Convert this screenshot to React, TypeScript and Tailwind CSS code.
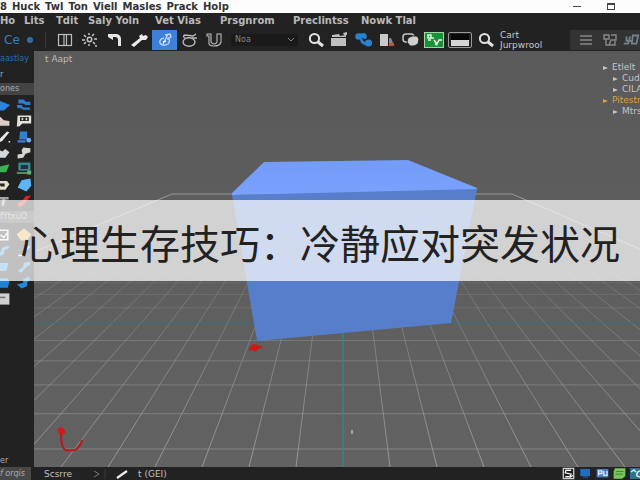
import type { ReactNode } from "react";

const titleWords = ["8", "Huck", "Twl", "Ton", "Viell", "Masles", "Prack", "Holp"];
const menus = ["Ho", "Lits", "Tdit", "Saly Yoln", "Vet Vias", "Prsgnrom", "Preclintss", "Nowk Tlal"];

const tree = [
  { label: "Etlelt", nested: false, active: false },
  { label: "Cuds", nested: true, active: false },
  { label: "CILA", nested: true, active: false },
  { label: "Pitestn", nested: false, active: true },
  { label: "Mtrs", nested: true, active: false },
];

// Perspective floor: lines meet at (343, 94), rows get denser with distance
const VX = 343;
const VY = 94;
const rows = Array.from({ length: 12 }, (_, i) => VY + 1 / (0.002817 + i * 0.00031));
const cols = Array.from({ length: 35 }, (_, i) => i - 17).filter((i) => i !== 0);

function Icon({ children, size = 20 }: { children: ReactNode; size?: number }) {
  return (
    <svg width={size} height={size} viewBox="0 0 20 20" fill="none" className="shrink-0">
      {children}
    </svg>
  );
}

const magnifier = (
  <g stroke="#e2e2e2">
    <circle cx="8.5" cy="8.5" r="4.6" strokeWidth="2" />
    <path d="M12 12l5 4" strokeWidth="3" />
  </g>
);

const modeTools = [
  {
    name: "Layout",
    icon: (
      <g stroke="#bdbdbd" strokeWidth="1.2">
        <rect x="3.5" y="4.5" width="13" height="11" />
        <path d="M9 5v10M11.5 5v10" />
      </g>
    ),
  },
  {
    name: "Particles",
    icon: (
      <g stroke="#c4c4c4" strokeWidth="1.5">
        <circle cx="9.5" cy="9.5" r="2.2" />
        <path d="M9 3v2M4 5l2 2M2 10h3M4 14l2-2M9 14v2M14 4l-2 2M14 9h3M13 12l2 2M15 16h2" />
      </g>
    ),
  },
  {
    name: "Bend",
    icon: <path d="M3 4l4 0 5 0q4 1 4 5v7h-3V10q0-3-3-3H8v3L3 7z" fill="#e4e4e4" />,
  },
  {
    name: "Hammer",
    icon: <path d="M1 15l9-7-1-2 3-2 1 2 3-1 2 2-2 3-4 0-8 7z" fill="#ececec" />,
  },
  {
    name: "Draw",
    icon: (
      <g stroke="#b9d5ff" strokeWidth="1.4">
        <path d="M9 8q-5 1-4 5 3 4 8 1 3-3 0-6M8 14l5-10M10 5l5-1 1 3-4 2" />
        <path d="M8 12l3-1" stroke="#fff" />
      </g>
    ),
  },
  {
    name: "Lasso",
    icon: (
      <g stroke="#b8b8b8" strokeWidth="1.4">
        <ellipse cx="9" cy="12" rx="6" ry="4.3" />
        <path d="M5 8q-3-2 0-3l8 1 3-2M12 8l5 0" />
      </g>
    ),
  },
  {
    name: "Magnet",
    icon: <path d="M2 4h4v8q1 2 3 2t3-2V4h4v8q-1 4-7 4t-5-4V6H2z" stroke="#bdbdbd" strokeWidth="1.1" />,
  },
];

const viewTools = [
  { name: "Search", icon: magnifier },
  {
    name: "Clip",
    icon: (
      <g fill="#bfbfbf">
        <path d="M1 8h15v8H1zM2 5l7-1 1 2 6-1v2H2zM13 3l4-1v3h-3z" />
      </g>
    ),
  },
  {
    name: "Link",
    icon: (
      <g fill="#2883cf">
        <circle cx="4.5" cy="6.5" r="3.2" />
        <path d="M4 4l7-1 2 3-1 3-5-1z" />
        <path d="M8 8q1 5 6 4l1 2-4 1q-5-1-5-6z" />
        <circle cx="14.5" cy="13" r="3.6" />
      </g>
    ),
  },
  {
    name: "Paint",
    icon: (
      <g>
        <path d="M2 4h8v12H2z" fill="#c9c9c9" />
        <path d="M11 8h2l2 5h-4z" fill="#888" />
        <path d="M11 13h5v3h-5z" fill="#e34433" />
      </g>
    ),
  },
  {
    name: "Duplicate",
    icon: (
      <g>
        <rect x="1" y="4" width="11" height="8" rx="3" stroke="#c5c5c5" strokeWidth="1.5" />
        <path d="M6 8l4-2h5l2 3-1 5-4 2H8l-3-4z" fill="#cfcfcf" stroke="#232323" />
      </g>
    ),
  },
];

const leftTools: ReactNode[] = [
  <path d="M1 3l18 7-8 7H1z" fill="#2e83dd" />,
  <path d="M1 4l6 1 4 4 7 1v6H1z" fill="#dccbc6" />,
  <path d="M2 15l4-3 9-9 3 1-9 11-5 2zM17 15h2v2h-2z" fill="#e8e8e8" />,
  <path d="M1 4l8 4 4-3 5 4-5 7H5l-4-3z" fill="#d4d8da" />,
  <path d="M1 8l17-4-4 10H1z" fill="#34b452" />,
  <g>
    <path d="M3 5h12l3 4-5 7H3z" fill="#e5dfc7" />
    <path d="M6 8h6v4H7z" fill="#222" />
  </g>,
  <path d="M2 5h15v3h-4l-2 8H8l1-8H2z" fill="#a7a7a7" />,
];
const rightTools: ReactNode[] = [
  <g fill="#2d7ed0">
    <path d="M3 3h7l2 3h6v4h-6L9 8H3z" />
    <path d="M1 10h6l2 3h8l1 3h-9l-3-2H2z" />
  </g>,
  <g>
    <path d="M2 3h17v10H8l-4 4H1z" fill="#e3e1da" />
    <path d="M5 5h11v5H5z" fill="#222" />
    <path d="M7 6h2v3H7zM12 6h2v3h-2z" fill="#e3e1da" />
  </g>,
  <g fill="#347fd0">
    <path d="M5 3h9v10H4z" />
    <circle cx="16" cy="14" r="3" fill="#76abe0" />
    <path d="M2 14h10v3H2z" />
  </g>,
  <path d="M9 3l9 1v5l-6 2-3 5-7 1v-5l6-1-1-4z" fill="#d6d5cd" />,
  <g>
    <path d="M3 2h15v10H3z" fill="#368d91" />
    <path d="M6 5h9v5H6z" fill="#20303a" />
    <path d="M1 14h13v2H1zM14 12h5v5h-5z" fill="#6cae75" />
  </g>,
  <path d="M7 4l11-2 1 9-6 7-11-5z" fill="#5db5f3" />,
  <path d="M2 13l7-5 3-4 7-1-5 6-4 6-6 3z" fill="#dc2523" />,
];
const lowerLeft: ReactNode[] = [
  <path d="M4 4h12v12H4zM7 10l4 3 5-6" stroke="#eee" strokeWidth="2" />,
  <path d="M2 14l5-3 2-5 7-3 2 3-6 3-1 5-6 3z" fill="#3e94dc" />,
  <path d="M3 5h14l-3 10H3z" fill="#3b90da" />,
  <path d="M2 4h14l2 4-2 8H2z" fill="#1e83d4" />,
  <g>
    <path d="M1 3h17v14H1z" fill="#d0d0d0" />
    <path d="M3 8h10" stroke="#777" strokeWidth="2" />
  </g>,
];
const lowerRight: ReactNode[] = [
  <path d="M10 2l9 7-5 8H6L1 9z" fill="#e3ad43" />,
  <path d="M3 16l4-1 10-11" stroke="#eee" strokeWidth="2" />,
  <path d="M2 15l7-5 1-5 7-2 1 4-6 4-5 6z" fill="#3f91da" />,
  <path d="M1 12l8-2V5l7-3 2 4-4 3v5l-7 3z" fill="#2389d8" />,
];

function ToolColumn({ icons, group }: { icons: ReactNode[]; group: string }) {
  return (
    <div className="flex flex-col">
      {icons.map((icon, i) => (
        <button key={i} aria-label={`${group} ${i + 1}`} className="flex h-4 w-[21px] items-center justify-center">
          <Icon size={16}>{icon}</Icon>
        </button>
      ))}
    </div>
  );
}

function TitleBar() {
  return (
    <header className="flex h-[13px] shrink-0 items-center justify-between bg-[#fdfdfd] text-[#333]">
      <h1 className="flex gap-[5px] text-[10px] leading-3 font-bold">
        {titleWords.map((word) => (
          <span key={word}>{word}</span>
        ))}
      </h1>
      <div className="flex pr-3">
        <button aria-label="Minimize" className="flex h-3 w-[34px] items-center justify-center">
          <span className="h-px w-2 bg-[#444]" />
        </button>
        <button aria-label="Maximize" className="flex h-3 w-[34px] items-center justify-center">
          <span className="h-[7px] w-2 border border-t-2 border-[#444]" />
        </button>
      </div>
    </header>
  );
}

function MenuBar() {
  return (
    <nav className="grid h-[15px] shrink-0 grid-cols-[24px_32px_32px_67px_65px_73px_68px_1fr] items-center bg-[#222]">
      {menus.map((menu) => (
        <button key={menu} className="whitespace-nowrap text-left text-[10px] leading-3 font-bold text-[#b8b8b8]">
          {menu}
        </button>
      ))}
    </nav>
  );
}

function Toolbar() {
  return (
    <div className="flex h-[23px] shrink-0 items-center overflow-hidden bg-[#222]">
      <button className="w-[27px] shrink-0 pl-1 text-left text-[12px] leading-4 text-[#397dbd]">Ce</button>
      <span className="size-[6px] shrink-0 rounded-full bg-[#326da7]" />
      <span className="mr-[6px] ml-3 h-4 w-px shrink-0 bg-[#223c50]" />
      {modeTools.map((tool) => (
        <button
          key={tool.name}
          aria-label={tool.name}
          className={`flex h-5 w-[25px] shrink-0 items-center justify-center ${tool.name === "Draw" ? "bg-[#3e7fd9]" : ""}`}
        >
          <Icon>{tool.icon}</Icon>
        </button>
      ))}
      <div className="relative mr-[6px] ml-1 h-3 w-[67px] shrink-0 bg-[#1a1a1a]">
        <select aria-label="Node" className="block h-3 w-full appearance-none pl-1 text-[8px] leading-3 text-[#858585]">
          <option>Noa</option>
        </select>
        <svg className="pointer-events-none absolute top-1 right-1" width="6" height="4" viewBox="0 0 6 4" fill="none">
          <path d="M0 0l3 3 3-3" stroke="#888" />
        </svg>
      </div>
      {viewTools.map((tool) => (
        <button key={tool.name} aria-label={tool.name} className="flex h-5 w-6 shrink-0 items-center justify-center">
          <Icon>{tool.icon}</Icon>
        </button>
      ))}
      <button aria-label="Nodes" className="flex h-4 w-5 shrink-0 items-center justify-center border border-[#a2d3a5] bg-[#189237]">
        <svg width="18" height="14" viewBox="0 0 18 14" fill="none">
          <path d="M3 2h3v3H3zM5 5h4M9 7l3 4 2-4h3M10 11l2 1M3 7h3" stroke="#e4f4e4" strokeWidth="1.5" />
        </svg>
      </button>
      <button aria-label="Panel" className="mx-1 flex h-4 w-6 shrink-0 items-center justify-center rounded-[2px] border border-[#999]">
        <span className="h-3 w-[18px] border-t-[6px] border-[#090909] bg-[#d4d4d4]" />
      </button>
      <button aria-label="Find" className="flex h-5 w-5 shrink-0 items-center justify-center">
        <Icon>{magnifier}</Icon>
      </button>
      <p className="ml-1 grow text-[9px] leading-[10px] text-[#c8c8c8]">
        Cart
        <br />
        Jurpwrool
      </p>
      <div className="flex h-5 w-[70px] shrink-0 items-center bg-[#333] pl-1 text-[#888]">
        <button aria-label="List" className="flex h-5 w-6 shrink-0 items-center justify-center">
          <Icon>
            <path d="M4 6h12M4 10h12M4 14h12" stroke="currentColor" strokeWidth="1.3" />
          </Icon>
        </button>
        <button aria-label="Layers" className="flex h-5 w-6 shrink-0 items-center justify-center">
          <Icon>
            <path d="M4 5h5v4H4zM6 9v6h4M11 5h5v5h-5l-2 5h6v-4" stroke="currentColor" strokeWidth="1.4" />
          </Icon>
        </button>
        <button aria-label="View" className="flex h-5 w-[18px] shrink-0 items-center justify-center">
          <Icon size={18}>
            <path d="M2 14h5l2-8M5 6v5h6M12 5h6l-2 9h-5z" stroke="#77818a" strokeWidth="2" />
          </Icon>
        </button>
      </div>
    </div>
  );
}

function Sidebar() {
  return (
    <aside className="flex w-[34px] shrink-0 flex-col overflow-hidden bg-[#222] text-[8px] text-[#aaa]">
      <h2 className="mt-[2px] h-3 leading-3 whitespace-nowrap text-[#286da8]">aastlay</h2>
      <p className="mt-1 h-3 leading-3">r</p>
      <h3 className="mt-[2px] h-3 bg-[#444] leading-3">ones</h3>
      <div className="mt-[2px] -ml-2 flex">
        <ToolColumn icons={leftTools} group="Tool" />
        <ToolColumn icons={rightTools} group="Shape" />
      </div>
      <h3 className="mt-[2px] mb-1 h-3 bg-[#444] leading-3 whitespace-nowrap">fYtxuO</h3>
      <div className="-ml-2 flex">
        <ToolColumn icons={lowerLeft} group="Modifier" />
        <ToolColumn icons={lowerRight} group="Brush" />
      </div>
      <p className="mt-auto h-3 leading-3">er</p>
    </aside>
  );
}

function Scene() {
  return (
    <svg className="block size-full" viewBox="34 51 606 416" preserveAspectRatio="xMidYMid slice">
      <defs>
        <linearGradient id="floor" x1="0" y1="230" x2="0" y2="467" gradientUnits="userSpaceOnUse">
          <stop offset="0" stopColor="#999" stopOpacity="0" />
          <stop offset="0.25" stopColor="#999" stopOpacity="0.35" />
          <stop offset="1" stopColor="#a0a0a0" stopOpacity="0.85" />
        </linearGradient>
        <linearGradient id="top" x1="0" y1="0" x2="0" y2="1">
          <stop offset="0" stopColor="#739bf8" />
          <stop offset="1" stopColor="#79a2ff" />
        </linearGradient>
      </defs>
      <g stroke="url(#floor)" strokeWidth="1">
        {cols.map((i) => (
          <path key={i} d={`M${VX + (i * 47 * 136) / 373} 230L${VX + i * 47} 467`} />
        ))}
      </g>
      {rows.map((y, i) => (
        <path key={i} d={`M34 ${y}H640`} stroke={i === 5 ? "#37747c" : "#999"} strokeOpacity={i === 5 ? 1 : Math.max(0.06, 0.65 - i * 0.06)} />
      ))}
      <path d="M34 252L172 194H512L640 249" stroke="#aaa" strokeWidth="0.8" fill="none" />
      <path d="M343 330V467" stroke="#338791" strokeWidth="1.4" />
      <path d="M264 162L408 160L477 188L476 191L232 195V193Z" fill="url(#top)" />
      <path d="M232 195L477 189L451 323L257 341Z" fill="#567ecb" />
      <path d="M249 348l4-4 4 1 6 2-5 2-2 3-4-2-3 1z" fill="#cf1717" />
      <path d="M57 429l4-2 3 2 2 3-3 3-4-1z" fill="#cc1d20" />
      <path d="M61 433q0 14 4 17 5 1 10 0 6-4 7-10" stroke="#b8191e" strokeWidth="2" fill="none" />
      <ellipse cx="352" cy="432" rx="1.2" ry="2.4" fill="#aaa08c" />
    </svg>
  );
}

function Outliner() {
  return (
    <ul className="absolute top-[11px] right-0 w-[38px] overflow-hidden text-[9px] leading-[11px]">
      {tree.map((item) => (
        <li
          key={item.label}
          className={`flex items-center gap-1 whitespace-nowrap ${item.nested ? "pl-[10px]" : ""} ${item.active ? "text-[#d6a443]" : "text-[#c4c4c4]"}`}
        >
          <svg width="6" height="6" viewBox="0 0 6 6" className="shrink-0" fill="currentColor">
            <path d="M1 1l5 2-5 2z" />
          </svg>
          {item.label}
        </li>
      ))}
    </ul>
  );
}

function StatusBar() {
  return (
    <footer className="flex h-[13px] shrink-0 items-center bg-[#222] text-[9px] leading-3 text-[#c0c0c0]">
      <button className="h-full w-[31px] bg-[#484848] text-left text-[8px] italic text-[#aaa]">f orqis</button>
      <span className="w-[53px] pl-[13px]">Scsrre</span>
      <svg width="22" height="10" viewBox="0 0 22 10" fill="none">
        <path d="M10 2l5 3-5 3" stroke="#777" />
        <path d="M21 0v10" stroke="#393939" />
      </svg>
      <svg className="mx-2" width="16" height="10" viewBox="0 0 16 10" fill="none">
        <path d="M3 9l10-7" stroke="#eee" strokeWidth="2.2" />
      </svg>
      <span>t (GEI)</span>
      <div className="ml-auto flex gap-1">
        <Icon size={13}>
          <path d="M2 2h16v16H2z" stroke="#ccc" strokeWidth="2" />
          <path d="M14 5H6l-1 4 9 2-2 4H5M12 16l5-3" stroke="#eee" strokeWidth="2" />
        </Icon>
        <Icon size={13}>
          <path d="M2 3h15v11H2z" fill="#1d70bd" />
          <path d="M6 14h8v3H6z" fill="#174f83" />
        </Icon>
        <Icon size={13}>
          <path d="M1 3h18v13H1z" fill="#4a80c8" />
          <path d="M4 13V6h5v4H4M12 6v7h5V6" stroke="#dce9fa" strokeWidth="2" />
        </Icon>
        <Icon size={13}>
          <path d="M3 2h16v12l-5 4H1V7z" fill="#78c65a" />
          <path d="M5 7h11M4 11h11" stroke="#3d8041" strokeWidth="1.5" />
        </Icon>
        <svg width="10" height="13" viewBox="0 0 10 13" fill="none">
          <path d="M0 1h10v11H0z" fill="#2d738e" />
          <path d="M1 5l3-2 2 2M10 4q-4 1-3 5l3 1" stroke="#d5edf4" strokeWidth="1.5" />
        </svg>
      </div>
    </footer>
  );
}

export default function App() {
  return (
    <div className="relative flex h-screen flex-col overflow-hidden bg-[#222] font-['DejaVu_Sans',sans-serif]">
      <TitleBar />
      <MenuBar />
      <Toolbar />
      <div className="flex min-h-0 grow">
        <Sidebar />
        <main className="relative min-w-0 grow bg-linear-to-b from-[#5a5a5a] to-[#626262]">
          <Scene />
          <span className="absolute top-[2px] left-[11px] text-[9px] leading-3 text-[#bbb]">t Aapt</span>
          <Outliner />
        </main>
      </div>
      <StatusBar />

      {/* Caption */}
      <div className="pointer-events-none absolute inset-x-0 top-[200px] flex h-[81px] items-center justify-center bg-white/72">
        <p className="pt-[2px] whitespace-nowrap font-['Noto_Sans_CJK_SC',sans-serif] text-[40px] leading-[80px] text-[#222]">
          心理生存技巧：冷静应对突发状况
        </p>
      </div>
    </div>
  );
}
